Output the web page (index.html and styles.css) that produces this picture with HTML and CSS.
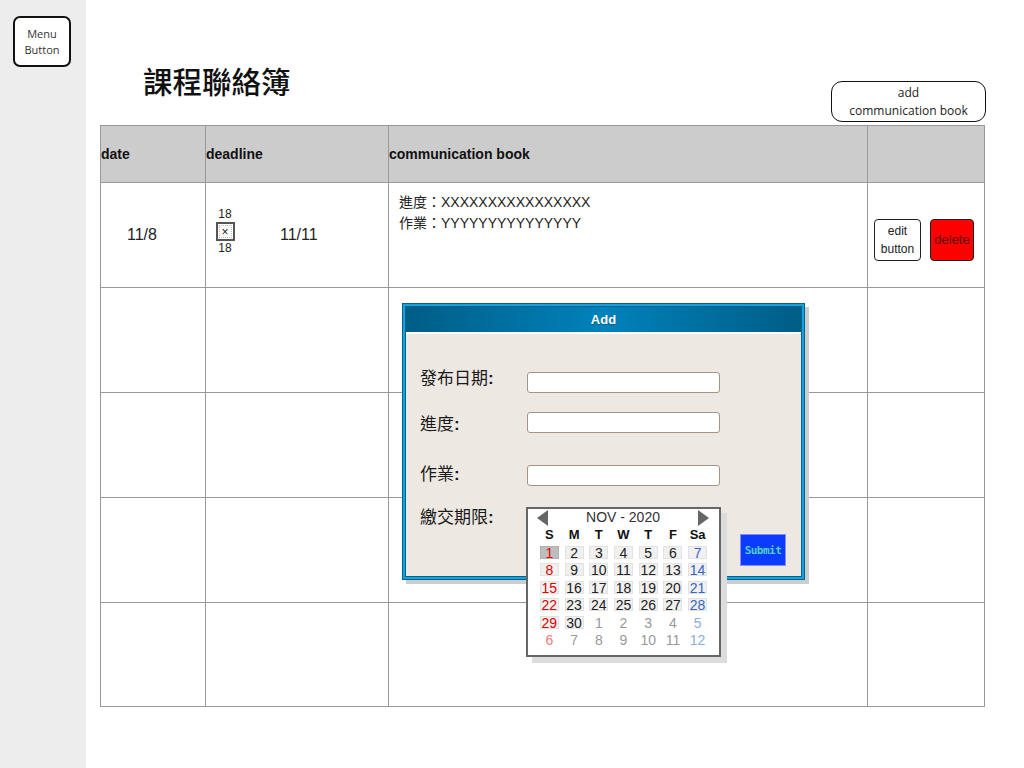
FILE: index.html
```html
<!DOCTYPE html>
<html lang="zh-Hant">
<head>
<meta charset="utf-8">
<title>課程聯絡簿</title>
<link rel="stylesheet" href="styles.css">
</head>
<body>
<div class="page">
  <aside class="sidebar">
    <button class="menu-btn">Menu<br>Button</button>
  </aside>
  <main class="main">
    <div class="topbar">
      <h1 class="title">課程聯絡簿</h1>
      <button class="add-btn">add<br>communication book</button>
    </div>
    <div class="table-wrap">
      <table class="grid">
        <colgroup>
          <col class="c-date"><col class="c-dead"><col class="c-comm"><col class="c-act">
        </colgroup>
        <thead>
          <tr><th>date</th><th>deadline</th><th>communication book</th><th></th></tr>
        </thead>
        <tbody>
          <tr>
            <td><span class="date">11/8</span></td>
            <td>
              <div class="deadline">
                <div class="spinner">
                  <span class="sp-num">18</span>
                  <span class="sp-box">×</span>
                  <span class="sp-num">18</span>
                </div>
                <span class="due">11/11</span>
              </div>
            </td>
            <td class="comm">進度：XXXXXXXXXXXXXXXX<br>作業：YYYYYYYYYYYYYYY</td>
            <td class="act">
              <div class="actions">
                <button class="edit-btn">edit<br>button</button>
                <button class="del-btn">delete</button>
              </div>
            </td>
          </tr>
          <tr><td></td><td></td><td></td><td></td></tr>
          <tr><td></td><td></td><td></td><td></td></tr>
          <tr><td></td><td></td><td></td><td></td></tr>
          <tr class="last"><td></td><td></td><td></td><td></td></tr>
        </tbody>
      </table>

      <div class="dialog">
        <div class="dialog-inner">
          <div class="dialog-title">Add</div>
          <div class="dialog-body">
            <div class="frow r1"><label class="lbl">發布日期<b>:</b></label><span class="field f1"></span></div>
            <div class="frow r2"><label class="lbl">進度<b>:</b></label><span class="field f2"></span></div>
            <div class="frow r3"><label class="lbl">作業<b>:</b></label><span class="field f3"></span></div>
            <div class="frow r4">
              <label class="lbl">繳交期限<b>:</b></label>
              <div class="cal">
                <div class="cal-head">
                  <svg class="tri" width="11" height="16" viewBox="0 0 11 16"><polygon points="11,0 11,16 0,8" fill="#666"/></svg>
                  <span class="cal-month">NOV - 2020</span>
                  <svg class="tri" width="11" height="16" viewBox="0 0 11 16"><polygon points="0,0 0,16 11,8" fill="#666"/></svg>
                </div>
                <div class="cal-grid">
                  <span class="dn">S</span><span class="dn">M</span><span class="dn">T</span><span class="dn">W</span><span class="dn">T</span><span class="dn">F</span><span class="dn">Sa</span>
                  <span class="d sun sel"><b>1</b></span><span class="d"><b>2</b></span><span class="d"><b>3</b></span><span class="d"><b>4</b></span><span class="d"><b>5</b></span><span class="d"><b>6</b></span><span class="d sat"><b>7</b></span>
                  <span class="d sun"><b>8</b></span><span class="d"><b>9</b></span><span class="d"><b>10</b></span><span class="d"><b>11</b></span><span class="d"><b>12</b></span><span class="d"><b>13</b></span><span class="d sat"><b>14</b></span>
                  <span class="d sun"><b>15</b></span><span class="d"><b>16</b></span><span class="d"><b>17</b></span><span class="d"><b>18</b></span><span class="d"><b>19</b></span><span class="d"><b>20</b></span><span class="d sat"><b>21</b></span>
                  <span class="d sun"><b>22</b></span><span class="d"><b>23</b></span><span class="d"><b>24</b></span><span class="d"><b>25</b></span><span class="d"><b>26</b></span><span class="d"><b>27</b></span><span class="d sat"><b>28</b></span>
                  <span class="d sun"><b>29</b></span><span class="d"><b>30</b></span><span class="d nx"><b>1</b></span><span class="d nx"><b>2</b></span><span class="d nx"><b>3</b></span><span class="d nx"><b>4</b></span><span class="d nx sat"><b>5</b></span>
                  <span class="d nx sun"><b>6</b></span><span class="d nx"><b>7</b></span><span class="d nx"><b>8</b></span><span class="d nx"><b>9</b></span><span class="d nx"><b>10</b></span><span class="d nx"><b>11</b></span><span class="d nx sat"><b>12</b></span>
                </div>
              </div>
              <button class="submit-btn">Submit</button>
            </div>
          </div>
        </div>
      </div>
    </div>
  </main>
</div>
</body>
</html>
```
FILE: styles.css
```css
* { box-sizing: border-box; }
html, body { margin: 0; padding: 0; }
body {
  font-family: "Liberation Sans", "Noto Sans CJK TC", sans-serif;
  color: #111;
  background: #fff;
}
.page { display: flex; width: 1024px; height: 768px; }
.sidebar {
  width: 86px;
  flex: none;
  background: #ededed;
  padding: 16px 0 0 13px;
}
.menu-btn {
  width: 58px; height: 51px;
  border: 2px solid #111;
  border-radius: 7px;
  background: #fff;
  font-family: "Open Sans", "Liberation Sans", sans-serif;
  font-size: 11px; line-height: 16px;
  color: #333;
  padding: 0;
}
.main { flex: 1; padding-left: 14px; }
.topbar {
  height: 125px;
  display: flex;
  justify-content: space-between;
  align-items: flex-start;
}
.title {
  margin: 60px 0 0 43px;
  font-family: "Noto Sans CJK TC", sans-serif;
  font-size: 29.5px;
  line-height: 40px;
  font-weight: 500;
  color: #111;
}
.add-btn {
  margin: 81px 38px 0 0;
  width: 155px; height: 41px;
  border: 1px solid #111;
  border-radius: 11px;
  background: #fff;
  font-family: "Open Sans", "Liberation Sans", sans-serif;
  font-size: 12px; line-height: 18px;
  color: #222;
  padding: 0;
}
.table-wrap { position: relative; width: 884px; }
.grid {
  width: 884px;
  border-collapse: collapse;
  table-layout: fixed;
}
.c-date { width: 105px; }
.c-dead { width: 183px; }
.c-comm { width: 479px; }
.c-act { width: 117px; }
.grid th, .grid td {
  border: 1px solid #999;
  padding: 0;
}
.grid thead tr { height: 57px; }
.grid th {
  background: #cccccc;
  text-align: left;
  font-size: 14px;
  font-weight: 700;
  padding-left: 0;
  color: #111;
}
.grid tbody tr { height: 105px; }
.grid tbody tr.last { height: 104px; }
.date { display: block; padding-left: 26px; font-size: 16px; color: #222; }
.deadline { display: flex; align-items: center; padding-left: 9px; }
.spinner {
  display: flex; flex-direction: column; align-items: center;
  width: 20px;
  font-size: 12px; line-height: 12px; color: #222;
  margin-bottom: 8px;
}
.sp-box {
  width: 19px; height: 19px;
  border: 2px solid #555;
  display: flex; align-items: center; justify-content: center;
  font-size: 12px; line-height: 1;
  margin: 2px 0 1px;
  outline: 1px dotted #bbb;
  outline-offset: -4px;
}
.due { margin-left: 45px; font-size: 16px; color: #222; }
.comm {
  vertical-align: top;
  padding: 9px 0 0 10px !important;
  font-size: 14px;
  line-height: 21px;
  color: #222;
}
.act { vertical-align: top; }
.actions { display: flex; gap: 9px; padding: 36px 0 0 6px; }
.edit-btn, .del-btn {
  height: 42px;
  border: 1px solid #222;
  border-radius: 4px;
  font-family: "Liberation Sans", sans-serif;
  font-size: 12px; line-height: 18px;
  padding: 0;
  color: #222;
}
.edit-btn { width: 47px; background: #fff; }
.del-btn { width: 44px; background: #ff0000; color: #5a0000; font-size: 13px; }

/* dialog overlay */
.dialog {
  position: absolute;
  left: 302px; top: 178px;
  width: 403px; height: 277px;
  border: 1px solid #00628e;
  background: #16a0dc;
  padding: 2px;
  box-shadow: 4px 4px 0 0 #cdcdcd;
}
.dialog-inner {
  height: 100%;
  border: 1px solid #00628e;
  background: #ede8e2;
  display: flex; flex-direction: column;
}
.dialog-title {
  height: 27px;
  flex: none;
  background: linear-gradient(90deg, #005d86 0%, #0082bb 50%, #005d86 100%);
  border-bottom: 2px solid #fff;
  color: #fff;
  font-family: "Liberation Sans", sans-serif;
  font-weight: 700;
  font-size: 13px;
  line-height: 25px;
  text-align: center;
  text-shadow: 0 1px 1px rgba(0,0,0,0.3);
}
.dialog-body { padding: 31px 0 0 14px; }
.frow { display: flex; align-items: flex-start; height: 26px; }
.r1 { margin-bottom: 20px; }
.r2 { margin-bottom: 24px; }
.r3 { margin-bottom: 17px; }
.lbl {
  width: 107px; flex: none;
  font-family: "Noto Sans CJK TC", sans-serif;
  font-size: 17px;
  line-height: 24px;
  color: #1a1a1a;
}
.lbl b { font-family: "Liberation Sans", sans-serif; font-weight: 700; }
.field {
  width: 193px; height: 21px;
  background: #fff;
  border: 1px solid #a39585;
  border-radius: 3px;
}
.f1 { margin-top: 7px; }
.f2 { margin-top: 1px; }
.f3 { margin-top: 4px; }

.cal {
  flex: none;
  width: 195px; height: 150px;
  margin: 3px 0 0 -1px;
  border: 2px solid #666;
  background: #fff;
  box-shadow: 6px 6px 0 0 #dcdcdc;
  position: relative;
  z-index: 2;
  padding: 0 9px 0 9px;
}
.cal-head {
  display: flex; align-items: center; justify-content: space-between;
  height: 17px;
  padding: 0 1px 0 0;
}
.cal-month { font-size: 14px; color: #333; line-height: 17px; }
.tri { display: block; }
.cal-grid {
  display: grid;
  grid-template-columns: repeat(7, 1fr);
  grid-auto-rows: 17.5px;
}
.dn {
  text-align: center;
  font-weight: 700;
  font-size: 13px;
  line-height: 17px;
  color: #111;
}
.d { display: flex; align-items: center; justify-content: center; }
.d b {
  font-weight: 400;
  display: inline-block;
  min-width: 19px;
  height: 13px;
  line-height: 13px;
  font-size: 14px;
  text-align: center;
  background: #f0f0f0;
  border: 1px solid #e2e2e2;
  color: #222;
}
.d.sel b { background: #bdbdbd; border-color: #b0b0b0; }
.d.sun b { color: #e00000; }
.d.sat b { color: #3565c0; }
.d.nx b { background: transparent; border-color: transparent; color: #999; }
.d.nx.sun b { color: #f07a7a; }
.d.nx.sat b { color: #8aaee0; }

.submit-btn {
  margin: 30px 0 0 19px;
  width: 46px; height: 32px;
  background: #0a3cff;
  border: 1px solid #8a8aff;
  color: #4fd0c4;
  font-family: "DejaVu Sans Mono", monospace;
  font-weight: 700;
  font-size: 11px;
  padding: 0;
  letter-spacing: -0.5px;
}
```
